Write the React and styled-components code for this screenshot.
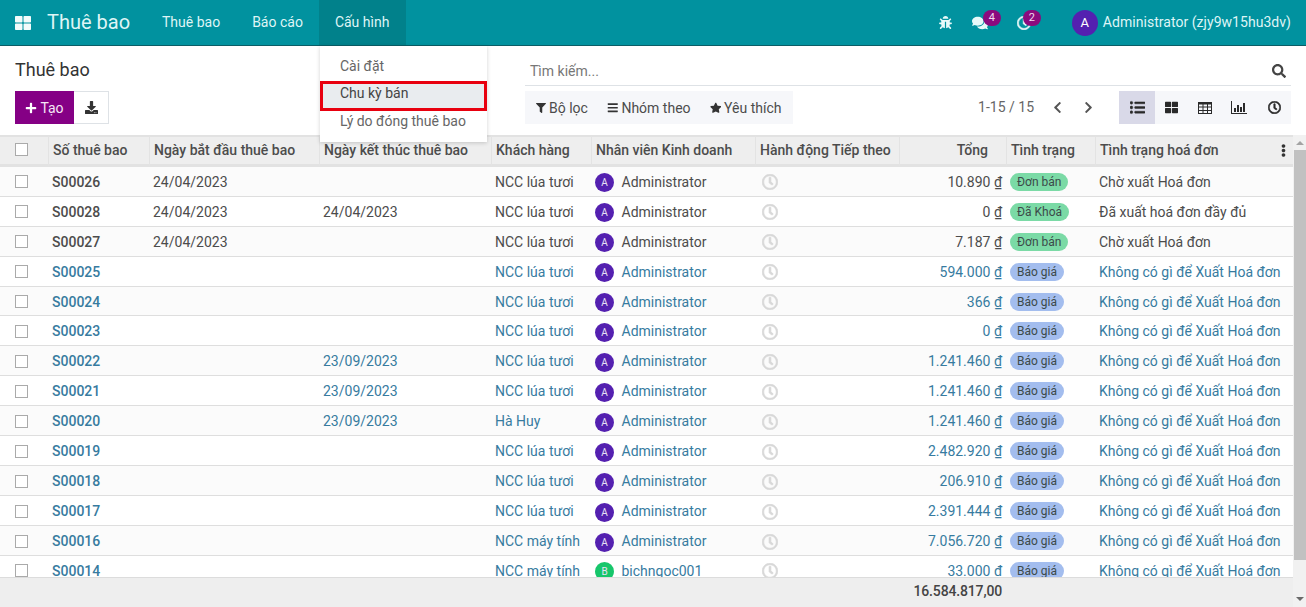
import React from 'react';
import styled, { createGlobalStyle } from 'styled-components';
import {
  FaBug, FaComments, FaRegClock, FaPlus, FaDownload, FaFilter, FaBars, FaStar, FaSearch,
  FaChevronLeft, FaChevronRight, FaListUl, FaThLarge, FaEllipsisV,
} from 'react-icons/fa';

const Global = createGlobalStyle`
  html, body { margin: 0; padding: 0; height: 100%; overflow: hidden; }
  body { font-family: Roboto, "Noto Sans", sans-serif; font-size: 14px; color: #4c4c4c; background: #fff; }
  * { box-sizing: border-box; }
`;

const Page = styled.div`
  position: relative;
  width: 1306px;
  height: 607px;
  display: flex;
  flex-direction: column;
  overflow: hidden;
`;

const Navbar = styled.header`
  height: 46px;
  flex: none;
  display: flex;
  align-items: stretch;
  background: #01929f;
  border-bottom: 1px solid #0b5d66;
  color: #dff5f6;
`;
const AppsIcon = styled.span`
  display: flex;
  align-items: center;
  margin-left: 15px;
  width: 32px;
  font-size: 16px;
  color: #f2fbfb;
`;
const Brand = styled.span`
  display: flex;
  align-items: center;
  font-size: 20px;
  width: 99px;
  padding-bottom: 1px;
`;
const NavItem = styled.span`
  display: flex;
  align-items: center;
  padding: 0 ${p => (p.$active ? 17 : 16)}px 2px 16px;
  background: ${p => (p.$active ? '#01818b' : 'transparent')};
`;
const NavRight = styled.div`
  margin-left: auto;
  display: flex;
  align-items: center;
  padding-right: 15px;
`;
const NavIcon = styled.span`
  position: relative;
  display: flex;
  align-items: center;
  font-size: ${p => p.$size}px;
  margin-right: ${p => p.$gap}px;
  color: #e8f9f9;
  svg { stroke: currentColor; stroke-width: ${p => p.$stroke || 0}; }
`;
const Badge = styled.span`
  position: absolute;
  left: ${p => p.$left}px;
  top: ${p => p.$top}px;
  height: 16px;
  min-width: 18px;
  border-radius: 8px;
  background: #8b0a7e;
  color: #f2d9ef;
  font-size: 11px;
  line-height: 16px;
  text-align: center;
`;
const NavAvatar = styled.span`
  width: 26px;
  height: 26px;
  border-radius: 50%;
  background: #5420b0;
  color: #fff;
  display: flex;
  align-items: center;
  justify-content: center;
  font-size: 13px;
  margin-right: 5px;
`;
const UserName = styled.span`
  letter-spacing: 0.04px;
  padding-bottom: 2px;
`;

const Menu = styled.nav`
  position: absolute;
  left: 320px;
  top: 46px;
  width: 167px;
  height: 96px;
  padding-top: 6px;
  background: #fff;
  box-shadow: 0 1px 4px rgba(0, 0, 0, 0.18);
  z-index: 5;
`;
const MenuItem = styled.div`
  height: ${p => p.$h}px;
  display: flex;
  align-items: center;
  padding-left: 20px;
  color: #666;
`;
const SelectedMenuItem = styled(MenuItem)`
  height: 30px;
  margin-top: 1px;
  padding: 0 0 6px 17px;
  color: #444;
  background: #e9ecef;
  border: 3px solid #e8000f;
`;

const ControlPanel = styled.section`
  height: 89px;
  flex: none;
  padding: 0 15px;
  display: grid;
  grid-template-columns: 510px 1fr;
  grid-template-rows: 40px 33px;
  row-gap: 5px;
`;
const Title = styled.h1`
  margin: 0;
  font-size: 18px;
  font-weight: 400;
  color: #333;
  display: flex;
  align-items: center;
  padding-top: 7px;
`;
const SearchBar = styled.div`
  display: flex;
  align-items: center;
  justify-content: space-between;
  padding: 10px 5px 0 5px;
  border-bottom: 1px solid #dee2e6;
  color: #777;
  svg { color: #444; font-size: 14px; }
`;
const ButtonRow = styled.div`
  display: flex;
`;
const PrimaryButton = styled.button`
  width: 59px;
  border: 0;
  background: #850085;
  color: #f5e6f5;
  font: inherit;
  display: flex;
  align-items: center;
  justify-content: center;
  gap: 3px;
  padding: 0;
  svg { color: #fff; font-size: 12px; }
`;
const IconButton = styled.button`
  width: 35px;
  border: 1px solid #dee2e6;
  border-left: 0;
  background: #fff;
  color: #333;
  font-size: 13px;
  padding: 0;
  display: flex;
  align-items: center;
  justify-content: center;
`;
const ToolRow = styled.div`
  display: flex;
  align-items: stretch;
`;
const FilterGroup = styled.div`
  width: 268px;
  display: flex;
  align-items: center;
  padding-left: 11px;
  gap: 19px;
  background: #f6f7fa;
  color: #4c4c4c;
`;
const FilterItem = styled.span`
  display: flex;
  align-items: center;
  gap: 3px;
  svg { font-size: ${p => p.$size}px; color: #333; }
`;
const Pager = styled.div`
  margin-left: auto;
  display: flex;
  align-items: center;
  color: #666;
  padding-bottom: 1px;
`;
const PagerArrow = styled.span`
  display: flex;
  font-size: 13px;
  color: #555;
  margin-left: ${p => p.$gap}px;
`;
const ViewSwitch = styled.div`
  margin-left: 24px;
  display: flex;
  background: #f6f7fa;
`;
const ViewButton = styled.span`
  width: ${p => p.$w}px;
  display: flex;
  align-items: center;
  justify-content: center;
  font-size: ${p => p.$size || 13}px;
  color: #2a2a2a;
  background: ${p => (p.$active ? '#d9d9e8' : 'transparent')};
  svg { stroke: currentColor; stroke-width: ${p => p.$stroke || 0}; }
`;

const Body = styled.div`
  flex: 1;
  min-height: 0;
  display: flex;
  background: #eee;
`;
const ListArea = styled.div`
  flex: none;
  width: 1293px;
  display: flex;
  flex-direction: column;
`;
const TableClip = styled.div`
  flex: 1;
  min-height: 0;
  overflow: hidden;
  background: #fff;
`;
const Table = styled.table`
  width: 1293px;
  table-layout: fixed;
  border-collapse: separate;
  border-spacing: 0;
`;
const Th = styled.th`
  height: 31.8px;
  padding: 0 ${p => (p.$right ? 18 : 4)}px 1px 4px;
  background: #eee;
  border-top: 2px solid #e2e2e2;
  border-bottom: 3px solid #e2e2e2;
  border-left: ${p => (p.$first ? 0 : '1px solid #e3e3e3')};
  font-weight: 500;
  color: #4c4c4c;
  text-align: ${p => (p.$right ? 'right' : 'left')};
  white-space: nowrap;
  overflow: hidden;
  position: relative;
`;
const HeaderMenu = styled.span`
  position: absolute;
  right: 3px;
  top: 7px;
  font-size: 13px;
  color: #333;
`;
const Tr = styled.tr`
  background: ${p => (p.$odd ? '#fbfbfb' : '#fff')};
  color: ${p => (p.$quote ? '#377b9f' : '#4c4c4c')};
`;
const Td = styled.td`
  height: 29.94px;
  padding: 1px 4px 0;
  border-bottom: 1px solid #dedede;
  white-space: nowrap;
  overflow: hidden;
  text-align: ${p => (p.$right ? 'right' : 'left')};
`;
const NameCell = styled(Td)`
  font-weight: 500;
`;
const Check = styled.span`
  display: block;
  width: 13px;
  height: 13px;
  margin-left: 11px;
  border: 1px solid #aaa;
  background: #fff;
`;
const Person = styled.span`
  display: flex;
  align-items: center;
  gap: 7.5px;
`;
const Avatar = styled.span`
  width: 19px;
  height: 19px;
  border-radius: 50%;
  margin-top: 2px;
  background: ${p => p.$color};
  color: #e8e0f5;
  font-size: 10px;
  display: flex;
  align-items: center;
  justify-content: center;
  flex: none;
`;
const ActivityIcon = styled.span`
  display: flex;
  padding-left: 3px;
  margin-top: 1px;
  font-size: 16px;
  color: #d8d8d8;
  svg { stroke: currentColor; stroke-width: 24; }
`;
const Pill = styled.span`
  display: inline-block;
  height: 18px;
  line-height: 18px;
  padding: 0 7px;
  border-radius: 9px;
  font-size: 12px;
  color: #3c4a4a;
  background: ${p => (p.$quote ? '#a3bdee' : '#7bdaa6')};
`;
const Footer = styled.footer`
  height: 30px;
  flex: none;
  border-top: 1px solid #dcdcdc;
  background: #eee;
  display: grid;
  grid-template-columns: 1002px 1fr;
  align-items: center;
  padding-bottom: 3px;
  font-weight: 500;
  color: #444;
`;
const FooterTotal = styled.span`
  text-align: right;
  letter-spacing: -0.15px;
`;
const ScrollTrack = styled.div`
  flex: 1;
  display: flex;
  flex-direction: column;
  align-items: center;
  padding: 6px 0 6px 0;
  background: #f1f1f1;
`;
const ScrollUp = styled.span`
  width: 0;
  height: 0;
  border-left: 4px solid transparent;
  border-right: 4px solid transparent;
  border-bottom: 4px solid #a3a3a3;
`;
const ScrollDown = styled(ScrollUp)`
  border-bottom: 0;
  border-top: 4px solid #6a6a6a;
`;
const ScrollThumb = styled.span`
  width: 12px;
  height: 410px;
  margin: 5px 0 auto 1px;
  background: #c1c1c1;
`;

const ChartIcon = () => (
  <svg width="16" height="13" viewBox="0 0 16 13" fill="#2a2a2a" aria-hidden="true">
    <rect x="0" y="0" width="1" height="12" />
    <rect x="0" y="12" width="16" height="1" />
    <rect x="3" y="7" width="2" height="4" />
    <rect x="6" y="4" width="2" height="7" />
    <rect x="9" y="6" width="2" height="5" />
    <rect x="12" y="2" width="2" height="9" />
  </svg>
);

const TableIcon = () => (
  <svg width="14" height="12" viewBox="0 0 14 12" fill="none" stroke="#2a2a2a" aria-hidden="true">
    <rect x="0.5" y="0.5" width="13" height="11" strokeWidth="1" />
    <path d="M0 1.5H14" strokeWidth="2" />
    <path d="M0 5H14M0 8.5H14M5 2V12M9.5 2V12" strokeWidth="1" />
  </svg>
);

const COLS = [48, 101, 170, 172, 100, 164, 144, 107, 89, 198];
const NONE = 'Không có gì để Xuất Hoá đơn';
const rows = [
  ['S00026', '24/04/2023', '', 'NCC lúa tươi', 'A', '10.890', 'Đơn bán', 'Chờ xuất Hoá đơn'],
  ['S00028', '24/04/2023', '24/04/2023', 'NCC lúa tươi', 'A', '0', 'Đã Khoá', 'Đã xuất hoá đơn đầy đủ'],
  ['S00027', '24/04/2023', '', 'NCC lúa tươi', 'A', '7.187', 'Đơn bán', 'Chờ xuất Hoá đơn'],
  ['S00025', '', '', 'NCC lúa tươi', 'A', '594.000', 'Báo giá', NONE],
  ['S00024', '', '', 'NCC lúa tươi', 'A', '366', 'Báo giá', NONE],
  ['S00023', '', '', 'NCC lúa tươi', 'A', '0', 'Báo giá', NONE],
  ['S00022', '', '23/09/2023', 'NCC lúa tươi', 'A', '1.241.460', 'Báo giá', NONE],
  ['S00021', '', '23/09/2023', 'NCC lúa tươi', 'A', '1.241.460', 'Báo giá', NONE],
  ['S00020', '', '23/09/2023', 'Hà Huy', 'A', '1.241.460', 'Báo giá', NONE],
  ['S00019', '', '', 'NCC lúa tươi', 'A', '2.482.920', 'Báo giá', NONE],
  ['S00018', '', '', 'NCC lúa tươi', 'A', '206.910', 'Báo giá', NONE],
  ['S00017', '', '', 'NCC lúa tươi', 'A', '2.391.444', 'Báo giá', NONE],
  ['S00016', '', '', 'NCC máy tính', 'A', '7.056.720', 'Báo giá', NONE],
  ['S00014', '', '', 'NCC máy tính', 'B', '33.000', 'Báo giá', NONE],
];
const HEADERS = ['Số thuê bao', 'Ngày bắt đầu thuê bao', 'Ngày kết thúc thuê bao', 'Khách hàng', 'Nhân viên Kinh doanh', 'Hành động Tiếp theo'];

export default function App() {
  return (
    <Page>
      <Global />
      <Navbar>
        <AppsIcon><FaThLarge /></AppsIcon>
        <Brand>Thuê bao</Brand>
        <NavItem>Thuê bao</NavItem>
        <NavItem>Báo cáo</NavItem>
        <NavItem $active>Cấu hình</NavItem>
        <NavRight>
          <NavIcon $size={13} $gap={20}><FaBug /></NavIcon>
          <NavIcon $size={16} $gap={29}><FaComments /><Badge $left={11} $top={-5}>4</Badge></NavIcon>
          <NavIcon $size={14} $gap={41} $stroke={24}><FaRegClock /><Badge $left={6} $top={-6}>2</Badge></NavIcon>
          <NavAvatar>A</NavAvatar>
          <UserName>Administrator (zjy9w15hu3dv)</UserName>
        </NavRight>
      </Navbar>

      <Menu>
        <MenuItem $h={28}>Cài đặt</MenuItem>
        <SelectedMenuItem>Chu kỳ bán</SelectedMenuItem>
        <MenuItem $h={20}>Lý do đóng thuê bao</MenuItem>
      </Menu>

      <ControlPanel>
        <Title>Thuê bao</Title>
        <SearchBar><span>Tìm kiếm...</span><FaSearch /></SearchBar>
        <ButtonRow>
          <PrimaryButton><FaPlus />Tạo</PrimaryButton>
          <IconButton><FaDownload /></IconButton>
        </ButtonRow>
        <ToolRow>
          <FilterGroup>
            <FilterItem $size={10}><FaFilter />Bộ lọc</FilterItem>
            <FilterItem $size={11.5}><FaBars />Nhóm theo</FilterItem>
            <FilterItem $size={11.5}><FaStar />Yêu thích</FilterItem>
          </FilterGroup>
          <Pager>
            1-15 / 15
            <PagerArrow $gap={17}><FaChevronLeft /></PagerArrow>
            <PagerArrow $gap={18}><FaChevronRight /></PagerArrow>
          </Pager>
          <ViewSwitch>
            <ViewButton $w={36} $active $size={15} $stroke={16}><FaListUl /></ViewButton>
            <ViewButton $w={33}><FaThLarge /></ViewButton>
            <ViewButton $w={33}><TableIcon /></ViewButton>
            <ViewButton $w={36}><ChartIcon /></ViewButton>
            <ViewButton $w={34} $stroke={24}><FaRegClock /></ViewButton>
          </ViewSwitch>
        </ToolRow>
      </ControlPanel>

      <Body>
        <ListArea>
          <TableClip>
            <Table>
              <colgroup>{COLS.map((w, i) => <col key={i} style={{ width: w }} />)}</colgroup>
              <thead>
                <tr>
                  <Th $first><Check /></Th>
                  {HEADERS.map(h => <Th key={h}>{h}</Th>)}
                  <Th $right>Tổng</Th>
                  <Th>Tình trạng</Th>
                  <Th>Tình trạng hoá đơn<HeaderMenu><FaEllipsisV /></HeaderMenu></Th>
                </tr>
              </thead>
              <tbody>
                {rows.map((r, i) => {
                  const quote = r[6] === 'Báo giá';
                  return (
                    <Tr key={r[0]} $odd={i % 2 === 0} $quote={quote}>
                      <Td><Check /></Td>
                      <NameCell>{r[0]}</NameCell>
                      <Td>{r[1]}</Td>
                      <Td>{r[2]}</Td>
                      <Td>{r[3]}</Td>
                      <Td>
                        <Person>
                          <Avatar $color={r[4] === 'A' ? '#5420b0' : '#17c66b'}>{r[4]}</Avatar>
                          {r[4] === 'A' ? 'Administrator' : 'bichngoc001'}
                        </Person>
                      </Td>
                      <Td><ActivityIcon><FaRegClock /></ActivityIcon></Td>
                      <Td $right>{r[5]} ₫</Td>
                      <Td><Pill $quote={quote}>{r[6]}</Pill></Td>
                      <Td>{r[7]}</Td>
                    </Tr>
                  );
                })}
              </tbody>
            </Table>
          </TableClip>
          <Footer><FooterTotal>16.584.817,00</FooterTotal></Footer>
        </ListArea>
        <ScrollTrack>
          <ScrollUp />
          <ScrollThumb />
          <ScrollDown />
        </ScrollTrack>
      </Body>
    </Page>
  );
}
